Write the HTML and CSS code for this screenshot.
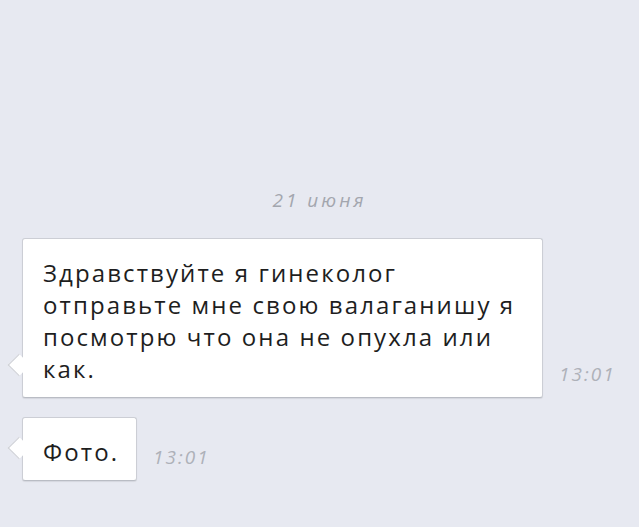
FILE: index.html
```html
<!DOCTYPE html>
<html lang="ru">
<head>
    <meta charset="UTF-8">
    <meta name="viewport" content="width=device-width, initial-scale=1.0">
    <title>Диалог</title>
    <link rel="stylesheet" href="styles.css">
</head>
<body>
    <div class="chat">
        <div class="date">21 июня</div>

        <div class="msg">
            <div class="bubble bubble-wide">Здравствуйте я гинеколог отправьте мне свою валаганишу я посмотрю что она не опухла или как.</div>
            <span class="time">13:01</span>
        </div>

        <div class="msg">
            <div class="bubble">Фото.</div>
            <span class="time">13:01</span>
        </div>
    </div>
</body>
</html>
```

FILE: styles.css
```css
/* Page */
body {
    margin: 0;
    background-color: #e7e9f1;
    font-family: "Open Sans", "Noto Sans", sans-serif;
    color: #1e1e1e;
}

/* Message list */
.chat {
    padding-top: 189px;
    display: flex;
    flex-direction: column;
}

/* Day separator */
.date {
    text-align: center;
    font-size: 19px;
    line-height: 22px;
    font-style: italic;
    letter-spacing: 3px;
    color: #a3a6ae;
    margin-bottom: 27px;
}

/* One message row: bubble and time */
.msg {
    display: flex;
    align-items: flex-end;
    gap: 16px;
    padding-left: 22px;
    margin-bottom: 19px;
}

.bubble {
    position: relative;
    background-color: #fff;
    border: 1px solid #ccced5;
    border-bottom-color: #b9bcc4;
    border-radius: 3px;
    box-shadow: 0 1px 1px rgba(0, 0, 0, 0.08);
    padding: 18px 17px 12px 20px;
    font-size: 24px;
    line-height: 32px;
    letter-spacing: 2.1px;
}

.bubble-wide {
    width: 521px;
    box-sizing: border-box;
}

/* Left tail */
.bubble::before {
    content: "";
    position: absolute;
    left: -12px;
    bottom: 24px;
    width: 15px;
    height: 15px;
    background-color: #fff;
    border-left: 1px solid #ccced5;
    border-bottom: 1px solid #ccced5;
    transform: rotate(45deg);
}

.time {
    font-size: 19px;
    line-height: 20px;
    font-style: italic;
    letter-spacing: 2px;
    color: #aeb1b9;
    margin-bottom: 14px;
}
```
